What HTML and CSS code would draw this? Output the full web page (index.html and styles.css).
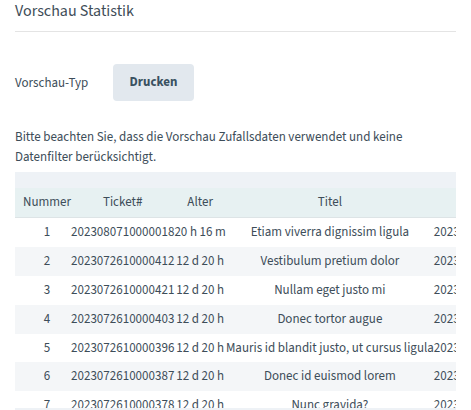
FILE: index.html
```html
<!DOCTYPE html>
<html lang="de">
<head>
<meta charset="utf-8">
<title>Vorschau Statistik</title>
<link rel="stylesheet" href="styles.css">
</head>
<body>
<div class="page">
  <h1 class="title">Vorschau Statistik</h1>
  <div class="field">
    <span class="field-label">Vorschau-Typ</span>
    <button class="btn" type="button">Drucken</button>
  </div>
  <p class="note">Bitte beachten Sie, dass die Vorschau Zufallsdaten verwendet und keine Datenfilter berücksichtigt.</p>
  <div class="table-wrap">
    <div class="table-scroll">
      <div class="table-top"></div>
      <table class="stats">
        <thead>
          <tr><th>Nummer</th><th>Ticket#</th><th>Alter</th><th>Titel</th><th>Erstellt</th></tr>
        </thead>
        <tbody>
          <tr><td>1</td><td>2023080710000018</td><td>20 h 16 m</td><td>Etiam viverra dignissim ligula</td><td>2023-08-07 13:44:18</td></tr>
          <tr><td>2</td><td>2023072610000412</td><td>12 d 20 h</td><td>Vestibulum pretium dolor</td><td>2023-07-26 13:44:18</td></tr>
          <tr><td>3</td><td>2023072610000421</td><td>12 d 20 h</td><td>Nullam eget justo mi</td><td>2023-07-26 13:44:18</td></tr>
          <tr><td>4</td><td>2023072610000403</td><td>12 d 20 h</td><td>Donec tortor augue</td><td>2023-07-26 13:44:18</td></tr>
          <tr><td>5</td><td>2023072610000396</td><td>12 d 20 h</td><td>Mauris id blandit justo, ut cursus ligula</td><td>2023-07-26 13:44:18</td></tr>
          <tr><td>6</td><td>2023072610000387</td><td>12 d 20 h</td><td>Donec id euismod lorem</td><td>2023-07-26 13:44:18</td></tr>
          <tr><td>7</td><td>2023072610000378</td><td>12 d 20 h</td><td>Nunc gravida?</td><td>2023-07-26 13:44:18</td></tr>
          <tr><td>8</td><td>2023072610000369</td><td>12 d 20 h</td><td>Sed ut perspiciatis</td><td>2023-07-26 13:44:18</td></tr>
        </tbody>
      </table>
    </div>
    <div class="table-foot"></div>
  </div>
</div>
</body>
</html>
```
FILE: styles.css
```css
* { box-sizing: border-box; }

html, body {
  margin: 0;
  padding: 0;
  background: #ffffff;
}

body {
  font-family: "Source Sans 3", "Source Sans Pro", Lato, sans-serif;
  font-size: 13px;
  color: #3d4d59;
  overflow: hidden;
}

.page {
  padding: 0 15px;
}

.title {
  margin: 0;
  font-size: 16px;
  font-weight: 400;
  line-height: 23px;
  color: #3e4c57;
  padding-bottom: 8px;
  border-bottom: 1px solid #e4e4e4;
}

.field {
  display: flex;
  align-items: center;
  margin-top: 32px;
}

.field-label {
  width: 98px;
  line-height: 18px;
}

.btn {
  font-family: inherit;
  font-size: 13px;
  font-weight: 700;
  color: #3a5161;
  background: #e2e8ee;
  border: 0;
  border-radius: 4px;
  padding: 10px 0;
  line-height: 17px;
  width: 81px;
  text-align: center;
}

.note {
  margin: 26px 0 0;
  max-width: 410px;
  line-height: 20px;
}

.table-wrap {
  margin-top: 5px;
}

.table-scroll {
  height: 236px;
  overflow: hidden;
}

.table-top {
  height: 16px;
  background: #eef2f6;
}

.stats {
  border-collapse: collapse;
}

.stats th,
.stats td {
  padding: 5px 0;
  text-align: center;
  white-space: nowrap;
  font-weight: 400;
  line-height: 18.9px;
}

.stats th:first-child,
.stats td:first-child {
  padding-left: 8px;
}

.stats thead th {
  background: #e7f1f2;
  border-bottom: 1px solid #dde4e6;
}

.stats tbody tr:nth-child(even) td {
  background: #f4f6f8;
}

.table-foot {
  height: 10px;
  background: #eef2f6;
}
```
